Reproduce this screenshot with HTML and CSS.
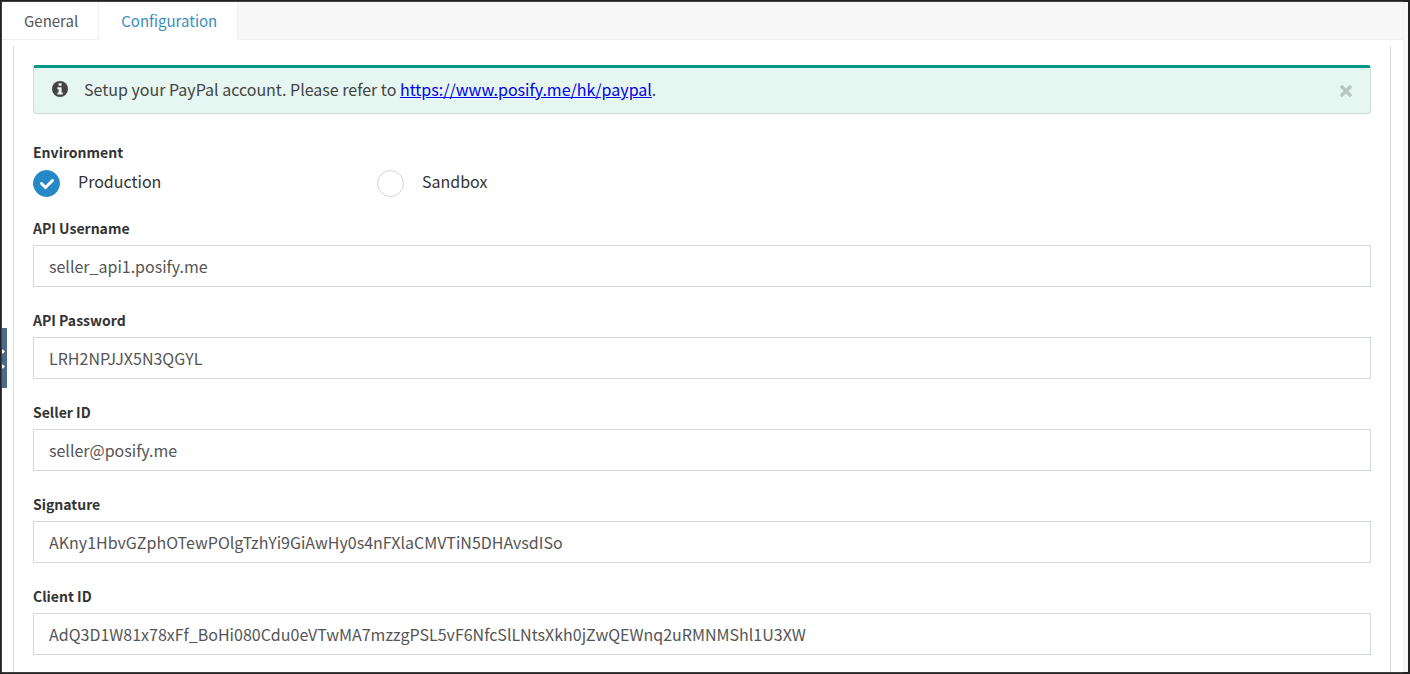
FILE: index.html
```html
<!DOCTYPE html>
<html lang="en">
<head>
  <meta charset="UTF-8">
  <meta name="viewport" content="width=device-width, initial-scale=1.0">
  <title>PayPal Configuration</title>
  <link rel="stylesheet" href="styles.css">
</head>
<body>

  <div class="page">
    <a class="side-handle" href="#" aria-label="Open menu">
      <svg width="5" height="60" viewBox="0 0 5 60">
        <path d="M0 22l1.500 1.500L0 25M0 37l1.500 1.500L0 40" fill="none" stroke="#fff" stroke-width="2"/>
      </svg>
    </a>

    <main class="box">
      <nav class="tabs">
        <a class="tab" href="#general">General</a>
        <a class="tab active" href="#configuration">Configuration</a>
      </nav>

      <form class="panel">
        <div class="alert">
          <svg class="alert-icon" width="16" height="16" viewBox="0 0 16 16">
            <circle cx="8" cy="8" r="8" fill="#444"/>
            <path d="M6.600 2.200h3v2.600h-3zM5.400 6.200h4.200v5.200h1.200v2H5.400v-2h1.200V8.200H5.400z" fill="#e6f6f0"/>
          </svg>
          <p class="alert-text">Setup your PayPal account. Please refer to <a href="https://www.posify.me/hk/paypal">https://www.posify.me/hk/paypal</a>.</p>
          <button class="close-btn" type="button" aria-label="Close">
            <svg width="12" height="12" viewBox="0 0 12 12">
              <path d="M2 2l8 8M10 2l-8 8" stroke="#b9c6c1" stroke-width="3.600" stroke-linecap="round"/>
            </svg>
          </button>
        </div>

        <fieldset class="environment">
          <legend>Environment</legend>
          <div class="options">
            <label class="option"><input type="radio" name="environment" value="production" checked><span>Production</span></label>
            <label class="option"><input type="radio" name="environment" value="sandbox"><span>Sandbox</span></label>
          </div>
        </fieldset>

        <div class="field">
          <label for="username">API Username</label>
          <input type="text" id="username" value="seller_api1.posify.me">
        </div>
        <div class="field">
          <label for="password">API Password</label>
          <input type="text" id="password" value="LRH2NPJJX5N3QGYL">
        </div>
        <div class="field">
          <label for="seller">Seller ID</label>
          <input type="text" id="seller" value="seller@posify.me">
        </div>
        <div class="field">
          <label for="signature">Signature</label>
          <input type="text" id="signature" value="AKny1HbvGZphOTewPOlgTzhYi9GiAwHy0s4nFXlaCMVTiN5DHAvsdISo">
        </div>
        <div class="field">
          <label for="client">Client ID</label>
          <input type="text" id="client" value="AdQ3D1W81x78xFf_BoHi080Cdu0eVTwMA7mzzgPSL5vF6NfcSlLNtsXkh0jZwQEWnq2uRMNMShl1U3XW">
        </div>
      </form>
    </main>
  </div>

</body>
</html>
```
FILE: styles.css
```css
* {
  margin: 0;
  padding: 0;
  box-sizing: border-box;
}

body {
  font-family: "Noto Sans CJK SC", "Source Sans Pro", sans-serif;
  font-size: 16px;
  line-height: 24px;
  color: #333;
}

.page {
  position: relative;
  display: flex;
  min-height: 100vh;
  padding-right: 5px;
  border: 2px solid #222;
  background: #f7f7f7;
}

.box {
  flex: 1;
  display: flex;
  flex-direction: column;
  background: #fff;
  box-shadow: 0 0 1px #ddd;
}

/* Tabs */
.tabs {
  display: flex;
  height: 38px;
  background: #f7f7f7;
  border-bottom: 1px solid #f0f0f0;
}

.tab {
  height: 37px;
  padding: 7px 20px 6px 22px;
  background: #fff;
  border-right: 1px solid #f0f0f0;
  font-size: 15px;
  color: #555;
  text-decoration: none;
}

.tab.active {
  height: 38px;
  color: #3c8dbc;
}

.panel {
  flex: 1;
  margin: 6px 12px 0 11px;
  padding: 19px 19px 17px;
  border: 1px solid #d9dbdd;
  border-top: none;
  border-bottom: none;
}

/* Alert */
.alert {
  display: flex;
  align-items: center;
  height: 49px;
  margin-bottom: 26px;
  padding: 0 18px 3px;
  background: #e6f6f0;
  border: 1px solid #cfdbd6;
  border-top: 3px solid #009688;
  border-radius: 3px;
  color: #444;
}

.alert-text {
  flex: 1;
  margin-left: 16px;
}

.alert-text a {
  color: #00e;
}

.close-btn {
  display: flex;
  padding-top: 4px;
  background: transparent;
  border: none;
  cursor: pointer;
}

/* Form */
.environment {
  margin-bottom: 19px;
  border: none;
}

.environment legend,
.field label {
  display: block;
  font-size: 14px;
  font-weight: bold;
}

.options {
  display: grid;
  grid-template-columns: repeat(4, 1fr);
  gap: 38px;
  padding-top: 6px;
}

.option {
  display: flex;
  gap: 18px;
  line-height: 22px;
}

.option input {
  appearance: none;
  width: 27px;
  height: 27px;
  border: 1px solid #d6d4d0;
  border-radius: 50%;
  background: #fff;
}

.option input:checked {
  border-color: #2489c5;
  background: #2489c5 url("data:image/svg+xml,%3Csvg xmlns='http://www.w3.org/2000/svg' viewBox='0 0 25 25'%3E%3Cpath d='M7.500 12.500l4 4 7-7' fill='none' stroke='white' stroke-width='3' stroke-linecap='round'/%3E%3C/svg%3E") center / 25px no-repeat;
}

.field label {
  margin-bottom: 5px;
}

.field input {
  display: block;
  width: 100%;
  height: 42px;
  padding: 0 15px;
  border: 1px solid #d2d6de;
  background: #fff;
  font: inherit;
  color: #555;
}

.field + .field {
  margin-top: 21px;
}

.side-handle {
  position: absolute;
  top: 326px;
  left: 0;
  width: 5px;
  height: 60px;
  background: #4c6a8a;
}

.side-handle svg {
  display: block;
}
```
